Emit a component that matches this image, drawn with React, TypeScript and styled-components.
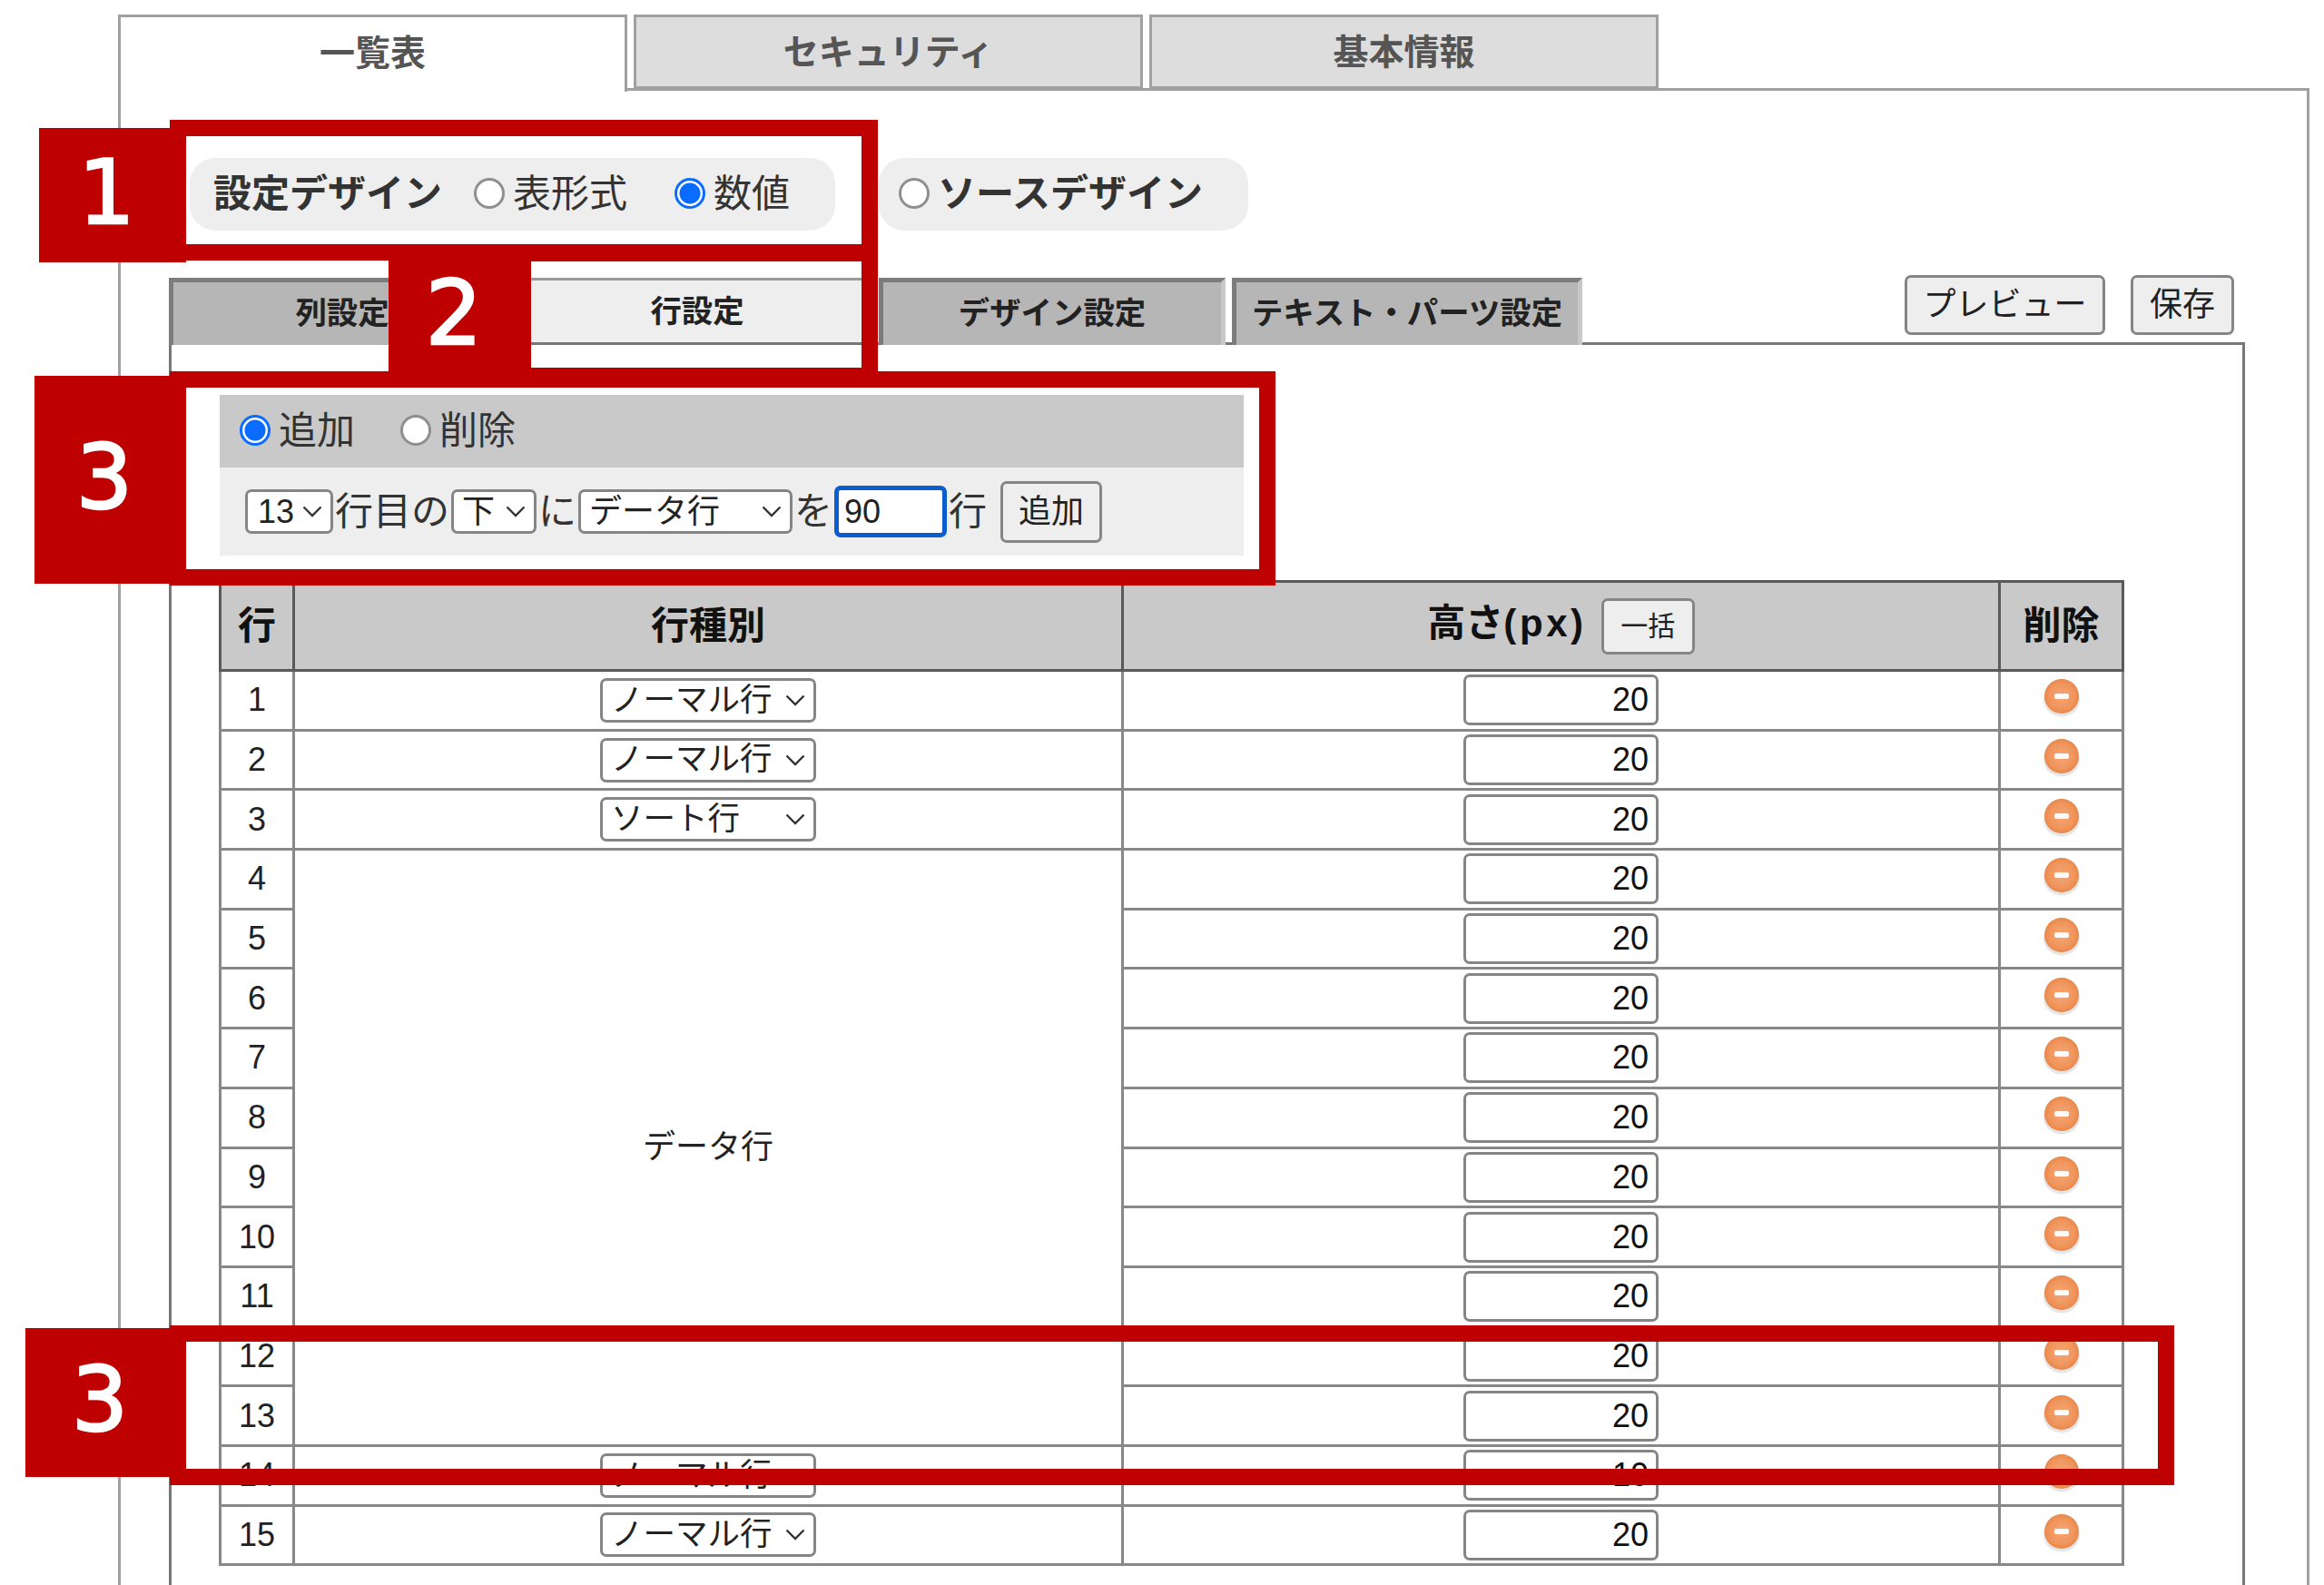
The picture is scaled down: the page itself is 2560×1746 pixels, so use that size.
import React from "react";
import styled, { createGlobalStyle } from "styled-components";

const GlobalStyle = createGlobalStyle`
  html, body {
    margin: 0;
    padding: 0;
    background: #fff;
  }
  body {
    font-family: "Liberation Sans", "Noto Sans CJK JP", sans-serif;
    line-height: 1;
    color: #222;
  }
  * {
    box-sizing: border-box;
  }
`;

const Page = styled.div`
  position: relative;
  width: 2560px;
  height: 1746px;
  overflow: hidden;
  padding: 16px 16px 0 130px;
`;

const TopTabs = styled.div`
  display: flex;
  gap: 7px;
  height: 82px;
  position: relative;
  z-index: 1;
`;

const TopTab = styled.div<{ $active?: boolean }>`
  width: 561px;
  height: ${({ $active }) => ($active ? "85px" : "82px")};
  display: flex;
  align-items: center;
  justify-content: center;
  padding-bottom: ${({ $active }) => ($active ? "3px" : "0")};
  font-size: 39px;
  font-weight: 700;
  color: #555;
  background: ${({ $active }) => ($active ? "#fff" : "#ddd")};
  border: 3px solid #a0a0a0;
  border-bottom: ${({ $active }) => ($active ? "none" : "3px solid #a0a0a0")};
`;

const Outer = styled.div`
  border: 3px solid #a0a0a0;
  border-bottom: none;
  margin-top: -1px;
  padding: 74px 68px 0 53px;
  height: 1700px;
`;

const DesignRow = styled.div`
  display: flex;
  gap: 48px;
  padding-left: 23px;
`;

const Pill = styled.div<{ $left: number; $right: number }>`
  display: flex;
  align-items: center;
  height: 80px;
  padding: 0 ${({ $right }) => $right}px 0 ${({ $left }) => $left}px;
  background: #eee;
  border-radius: 28px;
  font-size: 42px;
`;

const DesignTitle = styled.span`
  font-weight: 700;
  color: #333;
  margin-right: 35px;
`;

const RadioLabel = styled.label<{ $gap?: number; $bold?: boolean }>`
  display: flex;
  align-items: center;
  gap: 9px;
  margin-right: ${({ $gap }) => $gap || 0}px;
  font-size: 42px;
  font-weight: ${({ $bold }) => ($bold ? 700 : 400)};
  color: #333;
`;

const Radio = styled.input.attrs({ type: "radio" })`
  appearance: none;
  width: 34px;
  height: 34px;
  margin: 0 0 2px;
  border-radius: 50%;
  border: 3px solid #8f8f8f;
  background: #fff;
  &:checked {
    border-color: #0a6cff;
    background: radial-gradient(circle, #0a6cff 0 11px, #fff 12px);
  }
`;

const SubBar = styled.div`
  display: flex;
  align-items: flex-start;
  justify-content: space-between;
  height: 74px;
  margin-top: 52px;
  margin-bottom: -3px;
  position: relative;
  z-index: 1;
`;

const SubTabs = styled.div`
  display: flex;
  gap: 9px;
`;

const SubTab = styled.div<{ $active?: boolean; $wide?: boolean }>`
  width: ${({ $wide }) => ($wide ? "386px" : "382px")};
  height: ${({ $active }) => ($active ? "71px" : "74px")};
  display: flex;
  align-items: center;
  justify-content: center;
  font-size: 34.4px;
  font-weight: 700;
  color: #222;
  white-space: nowrap;
  background: ${({ $active }) => ($active ? "#eee" : "#b6b6b6")};
  border-top: ${({ $active }) => ($active ? "3px solid #999" : "5px solid #7c7c7c")};
  border-left: 5px solid ${({ $active }) => ($active ? "#eee" : "#7c7c7c")};
  border-right: 5px solid ${({ $active }) => ($active ? "#eee" : "#c8c8c8")};
  &:last-child {
    margin-left: -2px;
  }
`;

const SubActions = styled.div`
  display: flex;
  gap: 28px;
  padding-right: 12px;
  margin-top: -3px;
`;

const PlainButton = styled.button<{ $w: number; $h: number; $size?: number }>`
  width: ${({ $w }) => $w}px;
  height: ${({ $h }) => $h}px;
  padding: 0;
  font-family: inherit;
  font-size: ${({ $size }) => $size || 36}px;
  line-height: 1;
  color: #222;
  background: #eee;
  border: 3px solid #858585;
  border-radius: 7px;
`;

const Inner = styled.div`
  border: 3px solid #777;
  border-bottom: none;
  height: 1500px;
  padding: 55px 0 0 53px;
`;

const Panel = styled.div`
  width: 1128px;
`;

const PanelHead = styled.div`
  display: flex;
  align-items: center;
  height: 80px;
  padding-left: 22px;
  background: #c9c9c9;
`;

const PanelBody = styled.div`
  display: flex;
  align-items: center;
  gap: 2px;
  height: 97px;
  padding-left: 28px;
  background: #eee;
  font-size: 42px;
  color: #333;
`;

const SelectBox = styled.div<{ $w: number; $pad?: number }>`
  display: inline-flex;
  align-items: center;
  justify-content: space-between;
  width: ${({ $w }) => $w}px;
  height: 49px;
  padding: 0 9px 0 ${({ $pad }) => $pad || 9}px;
  font-size: ${({ $pad }) => ($pad ? 36 : 35.5)}px;
  color: #222;
  background: #fff;
  border: 3px solid #858585;
  border-radius: 7px;
  white-space: nowrap;
`;

const CellSelect = styled(SelectBox)`
  display: flex;
  margin: 0 auto;
`;

const Chevron = styled.svg`
  width: 22px;
  height: 13px;
  flex: none;
`;

const FocusInput = styled.input`
  width: 124px;
  height: 57px;
  padding: 0 0 0 6px;
  font-family: inherit;
  font-size: 36px;
  color: #222;
  background: #fff;
  border: 5px solid #0a5ecf;
  border-radius: 7px;
  outline: none;
`;

const AddButton = styled(PlainButton)`
  margin-left: 13px;
`;

const Table = styled.table`
  width: 2096px;
  margin: 27px 0 0 -1px;
  border-collapse: collapse;
  table-layout: fixed;
  font-size: 36px;
  color: #222;
`;

const HeadCell = styled.th`
  height: 98px;
  padding: 0;
  font-size: 42px;
  font-weight: 700;
  color: #111;
  background: #c9c9c9;
  border: 3px solid #5a5a5a;
`;

const HeadUnit = styled.span`
  letter-spacing: 3.6px;
`;

const BulkButton = styled(PlainButton)`
  margin-left: 16px;
  vertical-align: middle;
`;

const Cell = styled.td`
  height: 65.7px;
  padding: 0;
  text-align: center;
  border: 3px solid #888;
`;

const HeightInput = styled.input`
  display: block;
  width: 215px;
  height: 56px;
  margin-left: 374px;
  padding: 0 8px 0 0;
  font-family: inherit;
  font-size: 36px;
  text-align: right;
  color: #111;
  background: #fff;
  border: 3px solid #858585;
  border-radius: 7px;
`;

const RemoveIcon = styled.svg`
  display: block;
  width: 44px;
  height: 44px;
  margin: -6px auto 0;
`;

const Frame = styled.div<{ $x: number; $y: number; $w: number; $h: number }>`
  position: absolute;
  left: ${({ $x }) => $x}px;
  top: ${({ $y }) => $y}px;
  width: ${({ $w }) => $w}px;
  height: ${({ $h }) => $h}px;
  border: 18px solid #bf0000;
  z-index: 2;
`;

const Badge = styled.div<{ $x: number; $y: number; $w: number; $h: number }>`
  position: absolute;
  left: ${({ $x }) => $x}px;
  top: ${({ $y }) => $y}px;
  width: ${({ $w }) => $w}px;
  height: ${({ $h }) => $h}px;
  display: flex;
  align-items: center;
  justify-content: center;
  padding: 0 13px 6px 0;
  background: #bf0000;
  color: #fff;
  font-family: "DejaVu Sans", sans-serif;
  font-size: 98px;
  -webkit-text-stroke: 2.5px #fff;
  z-index: 3;
`;

const Arrow = () => (
  <Chevron viewBox="0 0 22 13">
    <polyline points="1.5,1.5 11,11 20.5,1.5" fill="none" stroke="#333" strokeWidth="2.4" />
  </Chevron>
);

const Remove = () => (
  <RemoveIcon viewBox="0 0 44 44">
    <defs>
      <radialGradient id="removeFill" cx="50%" cy="50%" r="52%">
        <stop offset="0%" stopColor="#f5a677" />
        <stop offset="70%" stopColor="#f0955c" />
        <stop offset="92%" stopColor="#ea8a4e" />
        <stop offset="100%" stopColor="#d9783e" />
      </radialGradient>
    </defs>
    <ellipse cx="22" cy="25" rx="20" ry="18.5" fill="#dcdcdc" opacity="0.7" />
    <circle cx="22" cy="21" r="19" fill="url(#removeFill)" />
    <rect x="14" y="18" width="16" height="6" rx="2" fill="#fff" opacity="0.95" />
  </RemoveIcon>
);

const rows: { no: number; kind?: string; height: number }[] = [
  { no: 1, kind: "ノーマル行", height: 20 },
  { no: 2, kind: "ノーマル行", height: 20 },
  { no: 3, kind: "ソート行", height: 20 },
  { no: 4, height: 20 },
  { no: 5, height: 20 },
  { no: 6, height: 20 },
  { no: 7, height: 20 },
  { no: 8, height: 20 },
  { no: 9, height: 20 },
  { no: 10, height: 20 },
  { no: 11, height: 20 },
  { no: 12, height: 20 },
  { no: 13, height: 20 },
  { no: 14, kind: "ノーマル行", height: 10 },
  { no: 15, kind: "ノーマル行", height: 20 },
];

const frames = [
  { x: 187, y: 132, w: 780, h: 155 },
  { x: 428, y: 270, w: 539, h: 153 },
  { x: 187, y: 409, w: 1218, h: 236 },
  { x: 187, y: 1460, w: 2208, h: 176 },
];

const badges = [
  { x: 43, y: 141, w: 162, h: 148, label: "1" },
  { x: 428, y: 287, w: 157, h: 122, label: "2" },
  { x: 38, y: 414, w: 167, h: 229, label: "3" },
  { x: 28, y: 1463, w: 177, h: 164, label: "3" },
];

export default function App() {
  return (
    <>
      <GlobalStyle />
      <Page>
        <TopTabs>
          <TopTab $active>一覧表</TopTab>
          <TopTab>セキュリティ</TopTab>
          <TopTab>基本情報</TopTab>
        </TopTabs>
        <Outer>
          <DesignRow>
            <Pill $left={26} $right={50}>
              <DesignTitle>設定デザイン</DesignTitle>
              <RadioLabel $gap={52}>
                <Radio name="design" />
                表形式
              </RadioLabel>
              <RadioLabel>
                <Radio name="design" defaultChecked />
                数値
              </RadioLabel>
            </Pill>
            <Pill $left={22} $right={50}>
              <RadioLabel $bold>
                <Radio name="source" />
                ソースデザイン
              </RadioLabel>
            </Pill>
          </DesignRow>
          <SubBar>
            <SubTabs>
              <SubTab>列設定</SubTab>
              <SubTab $active>行設定</SubTab>
              <SubTab>デザイン設定</SubTab>
              <SubTab $wide>テキスト・パーツ設定</SubTab>
            </SubTabs>
            <SubActions>
              <PlainButton $w={221} $h={66}>プレビュー</PlainButton>
              <PlainButton $w={114} $h={66}>保存</PlainButton>
            </SubActions>
          </SubBar>
          <Inner>
            <Panel>
              <PanelHead>
                <RadioLabel $gap={50}>
                  <Radio name="mode" defaultChecked />
                  追加
                </RadioLabel>
                <RadioLabel>
                  <Radio name="mode" />
                  削除
                </RadioLabel>
              </PanelHead>
              <PanelBody>
                <SelectBox $w={97} $pad={11}>13<Arrow /></SelectBox>
                <span>行目の</span>
                <SelectBox $w={94} $pad={9}>下<Arrow /></SelectBox>
                <span>に</span>
                <SelectBox $w={236} $pad={9}>データ行<Arrow /></SelectBox>
                <span>を</span>
                <FocusInput defaultValue="90" />
                <span>行</span>
                <AddButton $w={112} $h={68}>追加</AddButton>
              </PanelBody>
            </Panel>
            <Table>
              <colgroup>
                <col width="81" />
                <col width="913" />
                <col width="966" />
                <col width="136" />
              </colgroup>
              <thead>
                <tr>
                  <HeadCell>行</HeadCell>
                  <HeadCell>行種別</HeadCell>
                  <HeadCell>
                    高さ<HeadUnit>(px)</HeadUnit>
                    <BulkButton $w={103} $h={62} $size={30}>一括</BulkButton>
                  </HeadCell>
                  <HeadCell>削除</HeadCell>
                </tr>
              </thead>
              <tbody>
                {rows.map((row) => (
                  <tr key={row.no}>
                    <Cell>{row.no}</Cell>
                    {row.kind ? (
                      <Cell>
                        <CellSelect $w={238}>{row.kind}<Arrow /></CellSelect>
                      </Cell>
                    ) : row.no === 4 ? (
                      <Cell rowSpan={10}>データ行</Cell>
                    ) : null}
                    <Cell>
                      <HeightInput defaultValue={row.height} />
                    </Cell>
                    <Cell>
                      <Remove />
                    </Cell>
                  </tr>
                ))}
              </tbody>
            </Table>
          </Inner>
        </Outer>
        {frames.map((f) => (
          <Frame key={`${f.x}-${f.y}`} $x={f.x} $y={f.y} $w={f.w} $h={f.h} />
        ))}
        {badges.map((b) => (
          <Badge key={`${b.x}-${b.y}`} $x={b.x} $y={b.y} $w={b.w} $h={b.h}>
            {b.label}
          </Badge>
        ))}
      </Page>
    </>
  );
}
